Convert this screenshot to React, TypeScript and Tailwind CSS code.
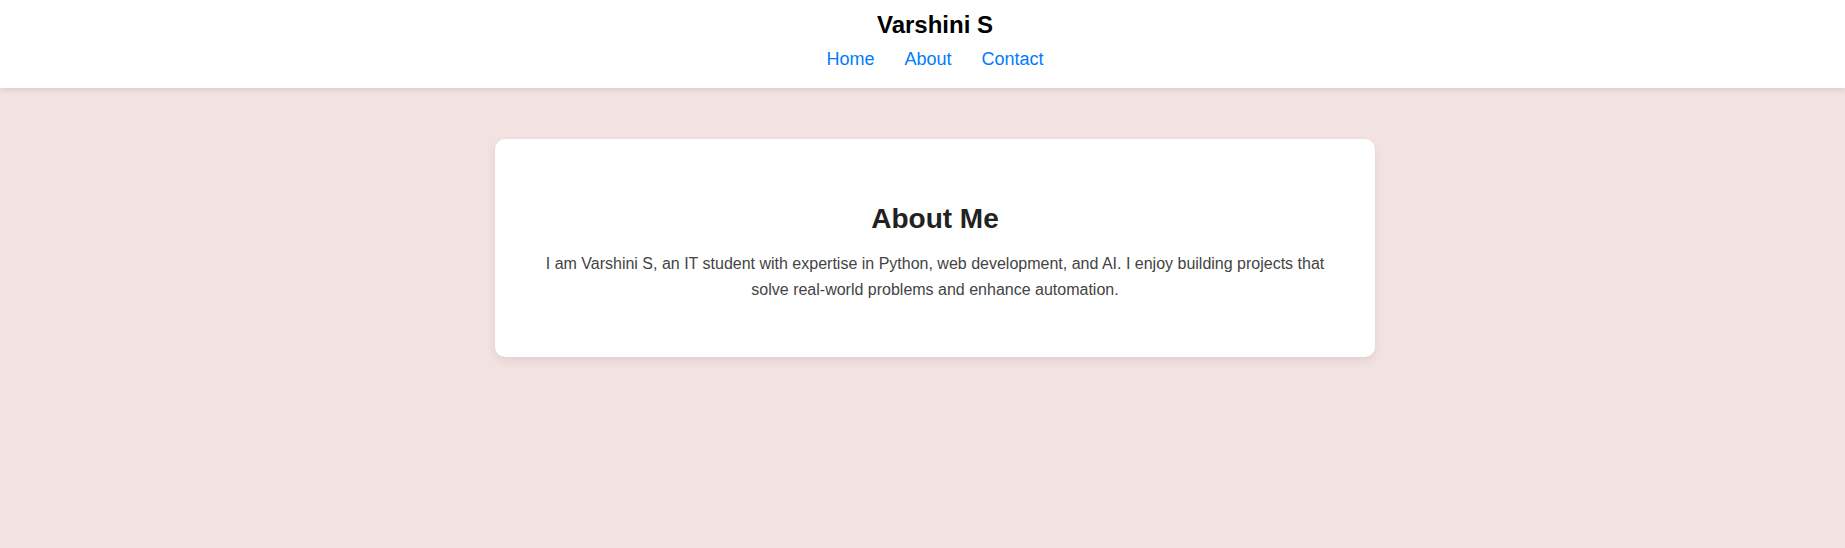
import React from "react";

export default function App() {
  return (
    <div
      className="min-h-screen w-full bg-[#f3e2e2]"
      style={{ fontFamily: '"Liberation Sans", Arial, sans-serif' }}
    >
      <header className="relative z-10 h-[88px] bg-white pl-[25px] pt-[11px] text-center shadow-[0_2px_6px_rgba(0,0,0,0.1)]">
        <h1 className="m-0 text-[24px] font-bold leading-[27.6px] text-black">Varshini S</h1>
        <nav className="mt-[10px] flex justify-center text-[18px] leading-[20.7px]">
          <a href="#" className="mx-[15px] text-[#007bff]">Home</a>
          <a href="#" className="mx-[15px] text-[#007bff]">About</a>
          <a href="#" className="mx-[15px] text-[#007bff]">Contact</a>
        </nav>
      </header>
      <main className="pl-[25px] pt-[51px]">
        <section className="mx-auto w-[880px] rounded-[10px] bg-white p-[40px] text-center shadow-[0_4px_10px_rgba(0,0,0,0.08)]">
          <h2 className="mt-[24px] mb-[16px] text-[28px] font-bold leading-[32.2px] text-[#222]">About Me</h2>
          <p className="mb-[15px] text-[16px] leading-[25.6px] text-[#444]">
            I am Varshini S, an IT student with expertise in Python, web development, and AI. I enjoy building projects that solve real-world problems and enhance automation.
          </p>
        </section>
      </main>
    </div>
  );
}
